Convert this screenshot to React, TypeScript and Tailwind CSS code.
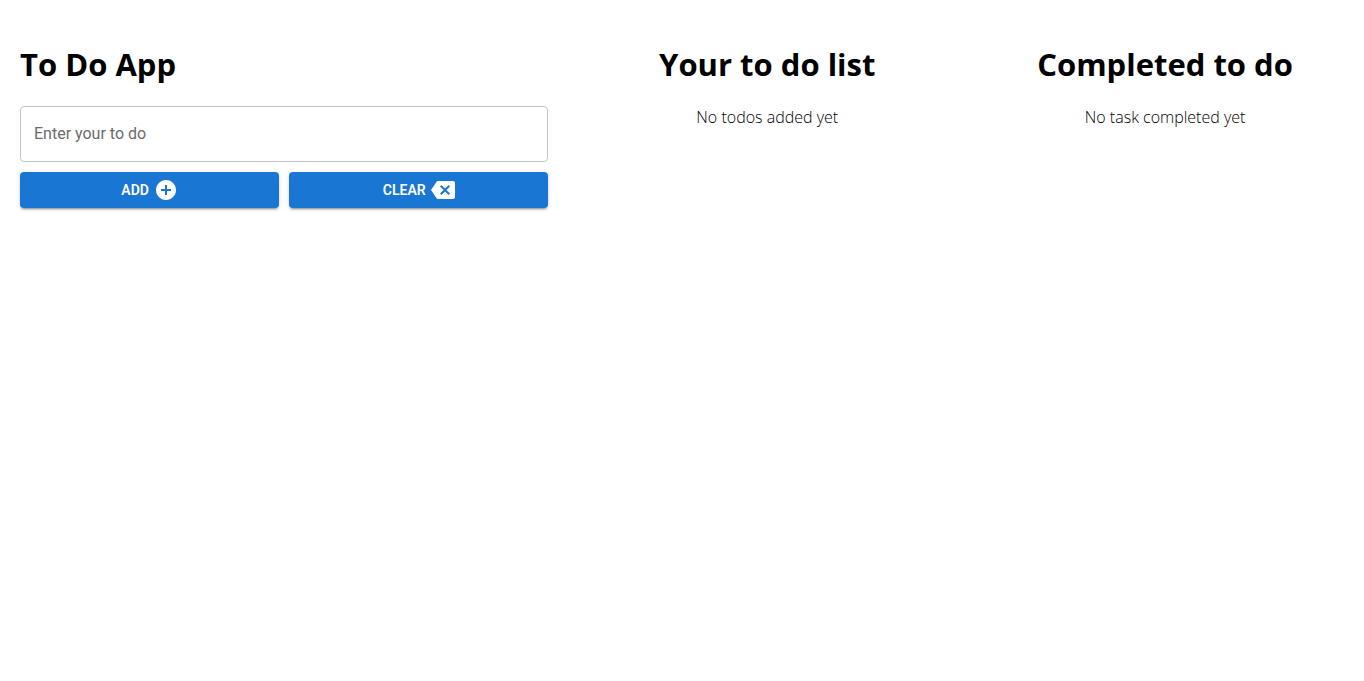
import { useState } from "react";
import type { FormEvent, ReactNode } from "react";
import { MdAddCircle, MdBackspace } from "react-icons/md";

const headingClass =
  "font-['Segoe_UI','Open_Sans',sans-serif] text-[31px] leading-[43px] font-bold";

const buttonClass =
  "flex h-9 flex-1 cursor-pointer items-center justify-center gap-[5px] rounded-sm bg-[#1976d2] font-['Roboto',sans-serif] text-sm font-semibold text-white uppercase shadow-[0_3px_1px_-2px_rgba(0,0,0,0.2),0_2px_2px_0_rgba(0,0,0,0.14),0_1px_5px_0_rgba(0,0,0,0.12)] hover:bg-[#1565c0]";

function ListColumn({ title, children }: { title: string; children: ReactNode }) {
  return (
    <section className="flex flex-col items-center gap-5 text-center">
      <h1 className={headingClass}>{title}</h1>
      <div className="font-['Segoe_UI','Open_Sans',sans-serif] text-base leading-[22px] font-light">
        {children}
      </div>
    </section>
  );
}

export default function App() {
  const [text, setText] = useState("");
  const [todos, setTodos] = useState<string[]>([]);
  const [completed, setCompleted] = useState<string[]>([]);

  const addTodo = (event: FormEvent) => {
    event.preventDefault();
    if (!text.trim()) return;
    setTodos([...todos, text.trim()]);
    setText("");
  };

  const complete = (index: number) => {
    setCompleted([...completed, todos[index]]);
    setTodos(todos.filter((_, i) => i !== index));
  };

  return (
    <main className="grid min-h-screen grid-cols-[10fr_7fr_7fr] content-start bg-white pt-[43px] text-black">
      <section className="flex flex-col gap-5 px-5">
        <h1 className={headingClass}>To Do App</h1>
        <form className="flex flex-col gap-[10px]" onSubmit={addTodo}>
          <input
            type="text"
            aria-label="Enter your to do"
            placeholder="Enter your to do"
            value={text}
            onChange={(event) => setText(event.target.value)}
            className="h-14 w-full rounded-sm border border-[#c4c4c4] px-[13px] pb-[2px] font-['Roboto',sans-serif] text-base text-black/87 outline-none placeholder:text-[#6b6b6b] focus:border-[#1976d2]"
          />
          <div className="flex gap-[10px]">
            <button type="submit" className={buttonClass}>
              Add
              <MdAddCircle className="size-6" aria-hidden="true" />
            </button>
            <button type="button" className={buttonClass} onClick={() => setText("")}>
              Clear
              <MdBackspace className="size-6" aria-hidden="true" />
            </button>
          </div>
        </form>
      </section>

      <ListColumn title="Your to do list">
        {todos.length === 0 ? (
          <p>No todos added yet</p>
        ) : (
          <ul>
            {todos.map((todo, index) => (
              <li key={index}>
                <label className="flex items-center gap-2">
                  <input type="checkbox" checked={false} onChange={() => complete(index)} />
                  {todo}
                </label>
              </li>
            ))}
          </ul>
        )}
      </ListColumn>

      <ListColumn title="Completed to do">
        {completed.length === 0 ? (
          <p>No task completed yet</p>
        ) : (
          <ul>
            {completed.map((todo, index) => (
              <li key={index}>{todo}</li>
            ))}
          </ul>
        )}
      </ListColumn>
    </main>
  );
}
